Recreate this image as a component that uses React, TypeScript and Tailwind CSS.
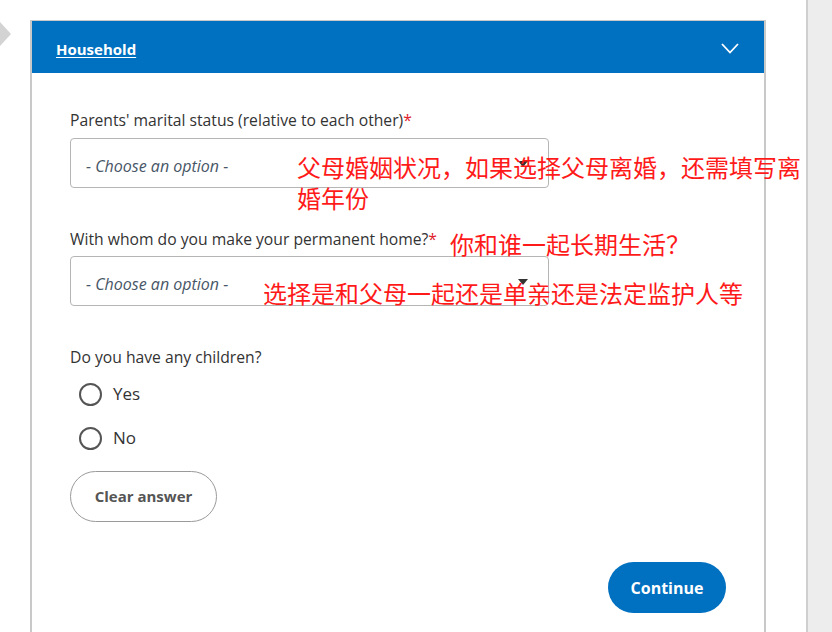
import React, { useState } from 'react';

const uiFont = { fontFamily: '"Open Sans", "Noto Sans", sans-serif' };
const cjkFont = { fontFamily: '"Noto Sans CJK SC", "Noto Sans", sans-serif' };

function SelectBox() {
  return (
    <div className="relative flex h-[50px] w-[479px] items-center rounded-[4px] border border-[#b5b5b5] bg-white pl-[15px] pt-[5px]">
      <span className="text-[16px] italic text-[#475666]">- Choose an option -</span>
      <span className="absolute right-[20px] top-[22px] h-0 w-0 border-x-[5px] border-t-[6px] border-x-transparent border-t-[#333]" />
    </div>
  );
}

function Radio({ label, checked, onClick }: { label: string; checked: boolean; onClick: () => void }) {
  return (
    <button type="button" onClick={onClick} className="flex h-[44px] items-center gap-[11px] pl-[9px] text-left">
      <span className="flex h-[23px] w-[23px] items-center justify-center rounded-full border-2 border-[#555]">
        {checked && <span className="h-[11px] w-[11px] rounded-full bg-[#0070c0]" />}
      </span>
      <span className="text-[17px] text-[#333]">{label}</span>
    </button>
  );
}

export default function App() {
  const [children, setChildren] = useState<string | null>(null);

  return (
    <div className="relative flex h-[632px] w-[832px] overflow-hidden bg-white" style={uiFont}>
      <div className="w-[30px] shrink-0 pt-[22px]">
        <svg width="11" height="24" viewBox="0 0 11 24">
          <path d="M0 0 L11 12 L0 24 Z" fill="#d3d3d3" />
        </svg>
      </div>

      <div className="mt-[20px] w-[736px] shrink-0 border-x-2 border-t border-[#c9c9c9]">
        <div className="flex h-[52px] items-center justify-between bg-[#0070c0] pl-[24px] pr-[25px] pt-[4px]">
          <a href="#" className="text-[15px] font-bold text-white underline underline-offset-2">
            Household
          </a>
          <svg width="18" height="11" viewBox="0 0 18 11" fill="none" className="mb-[2px]">
            <path d="M1 1 L9 9.5 L17 1" stroke="white" strokeWidth="1.8" />
          </svg>
        </div>

        <div className="flex flex-col px-[38px] pt-[37px]">
          <label className="h-[20px] text-[15.7px] leading-[20px] text-[#333]">
            Parents' marital status (relative to each other)<span className="text-[#e0212b]">*</span>
          </label>
          <div className="mt-[8px]">
            <SelectBox />
          </div>

          <label className="mt-[41px] h-[20px] text-[15.7px] leading-[20px] text-[#333]">
            With whom do you make your permanent home?<span className="text-[#e0212b]">*</span>
          </label>
          <div className="mt-[7px]">
            <SelectBox />
          </div>

          <label className="mt-[41px] h-[20px] text-[15.7px] leading-[20px] text-[#333]">
            Do you have any children?
          </label>
          <div className="mt-[5px] flex flex-col">
            <Radio label="Yes" checked={children === 'yes'} onClick={() => setChildren('yes')} />
            <Radio label="No" checked={children === 'no'} onClick={() => setChildren('no')} />
          </div>

          <button
            type="button"
            onClick={() => setChildren(null)}
            className="mt-[11px] h-[51px] w-[147px] rounded-full border border-[#9a9a9a] bg-white text-[15px] font-bold text-[#555]"
          >
            Clear answer
          </button>

          <div className="mt-[40px] flex justify-end">
            <button
              type="button"
              className="h-[51px] w-[118px] rounded-full bg-[#0070c0] text-[16px] font-bold text-white"
            >
              Continue
            </button>
          </div>
        </div>
      </div>

      <div className="w-[40px] shrink-0" />
      <div className="flex-1 border-l-2 border-[#cfcfcf] bg-[#ededed]" />

      {/* red annotations laid over the form */}
      <div className="absolute left-[297px] top-[151px] w-[510px] text-[24px] leading-[31px] text-[#ff1a1a]" style={cjkFont}>
        父母婚姻状况，如果选择父母离婚，还需填写离婚年份
      </div>
      <div className="absolute left-[450px] top-[228px] text-[24px] leading-[31px] text-[#ff1a1a]" style={cjkFont}>
        你和谁一起长期生活？
      </div>
      <div className="absolute left-[263px] top-[277px] text-[24px] leading-[31px] text-[#ff1a1a]" style={cjkFont}>
        选择是和父母一起还是单亲还是法定监护人等
      </div>
    </div>
  );
}
